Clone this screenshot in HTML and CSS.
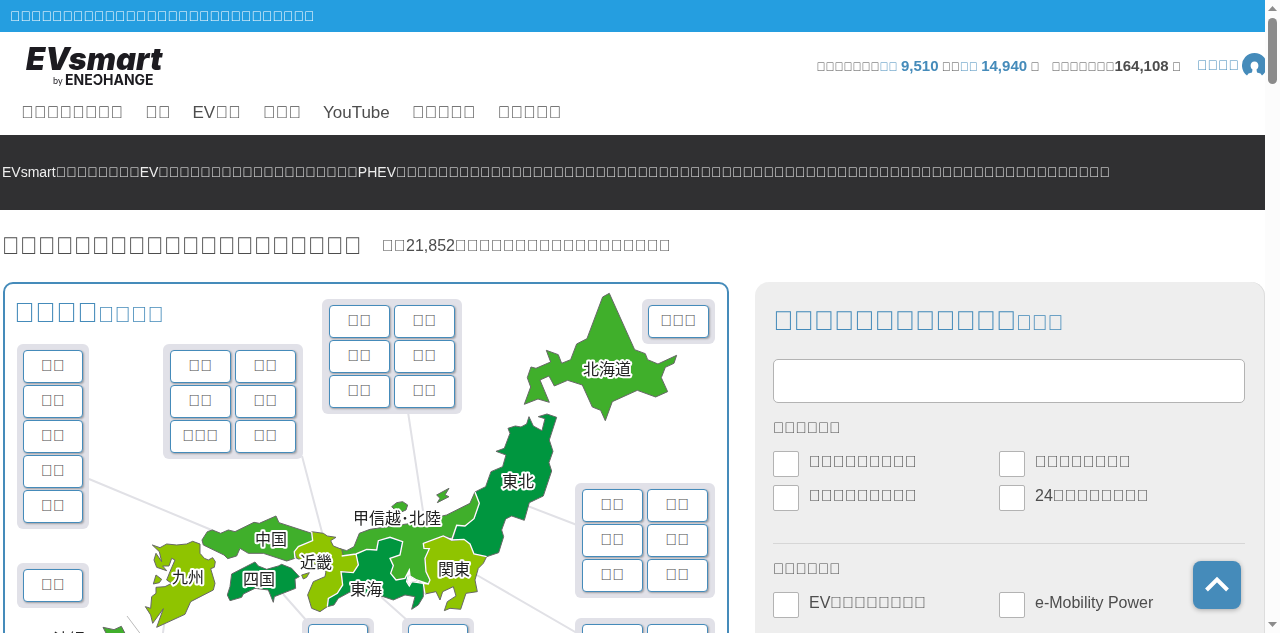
FILE: index.html
```html
<!DOCTYPE html>
<html lang="ja">
<head>
  <meta charset="UTF-8">
  <title>EVsmart</title>
  <link rel="stylesheet" href="styles.css">
</head>
<body>
  <div class="topbar">&#xE000;&#xE000;&#xE000;&#xE000;&#xE000;&#xE000;&#xE000;&#xE000;&#xE000;&#xE000;&#xE000;&#xE000;&#xE000;&#xE000;&#xE000;&#xE000;&#xE000;&#xE000;&#xE000;&#xE000;&#xE000;&#xE000;&#xE000;&#xE000;&#xE000;&#xE000;&#xE000;&#xE000;&#xE000;</div>

  <header class="header">
    <div class="header-row">
      <a href="#" class="logo">
        <svg width="142" height="50" viewBox="0 0 142 50">
          <text class="logo-main" x="1" y="30">EVsmart</text>
          <text class="logo-by" x="28" y="44">by</text>
          <text class="logo-sub" x="40" y="45">ENEƆHANGE</text>
        </svg>
      </a>
      <div class="stats">
        <p>&#xE000;&#xE000;&#xE000;&#xE000;&#xE000;&#xE000;&#xE000;<a href="#">&#xE000;&#xE000; <b>9,510</b></a> &#xE000;&#xE000;<a href="#">&#xE000;&#xE000; <b>14,940</b></a> &#xE000;</p>
        <p>&#xE000;&#xE000;&#xE000;&#xE000;&#xE000;&#xE000;&#xE000;<b>164,108</b> &#xE000;</p>
        <a href="#" class="login">&#xE000;&#xE000;&#xE000;&#xE000;
          <svg width="25" height="25" viewBox="0 0 25 25">
            <path fill="#458bba" d="M5 22.500A12.500 12.500 0 1 1 20 22.500L18.500 20.500 15 19.500 14.500 16.500C17.500 14.500 17 8.500 12.500 8.500S7.500 14.500 10.500 16.500L10 19.500 6.500 20.500Z"/>
          </svg>
        </a>
      </div>
    </div>
    <nav class="nav">
      <a href="#">&#xE000;&#xE000;&#xE000;&#xE000;&#xE000;&#xE000;&#xE000;&#xE000;</a>
      <a href="#">&#xE000;&#xE000;</a>
      <a href="#">EV&#xE000;&#xE000;</a>
      <a href="#">&#xE000;&#xE000;&#xE000;</a>
      <a href="#">YouTube</a>
      <a href="#">&#xE000;&#xE000;&#xE000;&#xE000;&#xE000;</a>
      <a href="#">&#xE000;&#xE000;&#xE000;&#xE000;&#xE000;</a>
    </nav>
  </header>

  <p class="intro">EVsmart&#xE000;&#xE000;&#xE000;&#xE000;&#xE000;&#xE000;&#xE000;&#xE000;EV&#xE000;&#xE000;&#xE000;&#xE000;&#xE000;&#xE000;&#xE000;&#xE000;&#xE000;&#xE000;&#xE000;&#xE000;&#xE000;&#xE000;&#xE000;&#xE000;&#xE000;&#xE000;&#xE000;PHEV&#xE000;&#xE000;&#xE000;&#xE000;&#xE000;&#xE000;&#xE000;&#xE000;&#xE000;&#xE000;&#xE000;&#xE000;&#xE000;&#xE000;&#xE000;&#xE000;&#xE000;&#xE000;&#xE000;&#xE000;&#xE000;&#xE000;&#xE000;&#xE000;&#xE000;&#xE000;&#xE000;&#xE000;&#xE000;&#xE000;&#xE000;&#xE000;&#xE000;&#xE000;&#xE000;&#xE000;&#xE000;&#xE000;&#xE000;&#xE000;&#xE000;&#xE000;&#xE000;&#xE000;&#xE000;&#xE000;&#xE000;&#xE000;&#xE000;&#xE000;&#xE000;&#xE000;&#xE000;&#xE000;&#xE000;&#xE000;&#xE000;&#xE000;&#xE000;&#xE000;&#xE000;&#xE000;&#xE000;&#xE000;&#xE000;&#xE000;&#xE000;&#xE000;</p>

  <div class="page-title">
    <h1>&#xE000;&#xE000;&#xE000;&#xE000;&#xE000;&#xE000;&#xE000;&#xE000;&#xE000;&#xE000;&#xE000;&#xE000;&#xE000;&#xE000;&#xE000;&#xE000;&#xE000;&#xE000;&#xE000;&#xE000;</h1>
    <p>&#xE000;&#xE000;21,852&#xE000;&#xE000;&#xE000;&#xE000;&#xE000;&#xE000;&#xE000;&#xE000;&#xE000;&#xE000;&#xE000;&#xE000;&#xE000;&#xE000;&#xE000;&#xE000;&#xE000;&#xE000;</p>
  </div>

  <main class="columns">
    <section class="map-card">
      <h2>&#xE000;&#xE000;&#xE000;&#xE000;<small>&#xE000;&#xE000;&#xE000;&#xE000;</small></h2>

      <svg class="map" width="722" height="420" viewBox="5 284 722 420">
        <g stroke="#e1e1e6" stroke-width="2">
          <path d="M89 479L214 531M302 456L324 540M408 412L423 511M525 505L577 525M475 574L577 633M380 596L408 621M283 594L306 620M165 618L162 640"/>
          <path stroke="#bbb" stroke-width="1" d="M127 616L142 636"/>
        </g>
        <g stroke="#666" stroke-width="3" stroke-linejoin="round">
          <!-- hokkaido -->
          <path transform="translate(310 275) scale(.3333)" fill="#40af2b" d="M878 66L898 55 974 224 1006 236 1013 254 1044 267 1100 241 1092 265 1066 277 1054 308 1073 350 1037 366 982 346 907 380 886 437 872 406 847 396 817 330 773 316 733 333 717 303 690 315 718 382 684 372 643 388 662 336 652 308 663 276 678 280 722 261 709 226 745 239 755 265 782 254 800 207 831 191Z"/>
          <g transform="translate(310 400) scale(.3333)">
            <!-- tohoku -->
            <path fill="#00963f" d="M657 50L670 78 696 92 705 56 685 50 711 42 740 52 718 120 729 154 717 188 725 213 700 288 658 308 643 361 605 348 587 357 575 390 581 410 566 458 530 470 492 462 480 432 462 418 425 422 440 376 465 378 492 356 508 310 495 276 527 260 543 215 578 200 588 165 558 154 583 145 600 100 594 85 616 78 633 81 650 72Z"/>
            <!-- koshinetsu, hokuriku -->
            <path fill="#40af2b" d="M495 276L508 310 492 356 465 378 440 376 430 415 400 408 372 418 340 430 342 445 358 446 345 475 348 515 360 540 355 552 320 540 300 528 298 510 285 535 258 540 242 520 250 497 240 475 270 465 278 425 240 412 205 422 200 450 170 448 138 462 95 468 90 446 110 452 132 440 148 400 180 388 290 372 410 345 480 310Z"/>
            <path fill="#40af2b" d="M380 285L417 265 405 285 417 290 382 308 390 295ZM245 320L260 308 278 305 293 315 288 330 265 340Z"/>
            <!-- kanto -->
            <path fill="#8fc400" d="M400 408L425 422 462 418 480 432 492 462 530 470 520 490 505 505 495 540 502 575 468 580 452 628 420 625 403 632 412 605 438 588 430 560 398 575 390 600 378 575 345 582 340 550 355 552 360 540 348 515 345 475 358 446 342 445 340 430 372 418Z"/>
            <!-- tokai -->
            <path fill="#00963f" d="M205 422L240 412 278 425 270 465 240 475 250 497 242 520 258 540 285 535 298 510 290 545 298 558 305 545 340 550 340 590 325 615 305 628 315 590 285 585 250 600 220 590 120 576 85 595 72 615 52 620 55 595 82 580 98 555 93 515 130 518 145 495 138 462 170 448 200 450Z"/>
          </g>
          <g transform="translate(120 480) scale(.3333)">
            <!-- chugoku -->
            <path fill="#40af2b" d="M262 155L277 150 302 160 325 150 345 155 402 127 418 130 468 108 477 128 575 160 578 182 535 200 523 215 525 235 500 243 430 220 385 220 360 205 350 228 323 236 312 225 250 195 246 180Z"/>
            <!-- kinki -->
            <path fill="#8fc400" d="M575 155L610 160 622 168 648 172 632 182 640 198 665 208 670 228 708 222 715 255 700 278 665 275 668 315 652 340 625 355 622 380 600 395 575 385 563 345 580 305 615 290 618 275 590 255 530 235 523 215 535 200 578 182ZM545 285L568 278 560 292 550 297Z"/>
            <!-- shikoku -->
            <path fill="#00963f" d="M335 282L405 246 415 258 440 268 475 258 485 253 515 265 538 290 525 297 527 325 463 350 460 367 445 330 405 325 370 342 365 352 330 362 322 345 330 320Z"/>
            <!-- kyushu -->
            <path fill="#8fc400" d="M97 195L120 203 140 192 170 195 200 192 218 184 240 192 240 220 253 235 265 240 278 233 286 245 283 262 272 266 285 310 280 330 212 365 195 403 110 442 130 386 98 430 92 405 76 380 92 385 95 350 108 340 108 322 135 320 155 310 140 300 150 275 165 240 155 235 147 258 128 258 140 272 110 262 102 240 108 220 125 245 118 215ZM108 285L125 298 118 308 100 312Z"/>
            <!-- okinawa -->
            <path fill="#40af2b" d="M-51 442L-18 449 4 439 16 462 9 480 -31 480Z"/>
          </g>
        </g>
        <!-- inner borders -->
        <g fill="none" stroke="#fff" stroke-width="4">
          <path transform="translate(310 400) scale(.3333)" d="M495 276L508 310 492 356 465 378 440 376 425 420 400 408 372 418 340 430 342 445 358 446 345 475 348 515 360 540 355 552 320 540 300 528 298 510 285 535 258 540 242 520 250 497 240 475 270 465 278 425 240 412 205 422 200 450 170 448 138 462 95 468M425 420L462 418 480 432 492 462 530 470M298 510L290 545 298 558 305 545 340 550 355 552M340 550L345 582M138 462L145 495 130 518 93 515 98 555 82 580 55 595 52 620"/>
          <path transform="translate(120 480) scale(.3333)" d="M575 155L578 182 535 200 523 215 525 235"/>
        </g>
        <g class="map-label">
          <text x="583" y="375">北海道</text>
          <text x="502" y="487">東北</text>
          <text x="353" y="524">甲信越･北陸</text>
          <text x="438" y="575">関東</text>
          <text x="350" y="595">東海</text>
          <text x="300" y="568">近畿</text>
          <text x="255" y="545">中国</text>
          <text x="243" y="585">四国</text>
          <text x="172" y="583">九州</text>
          <text x="53" y="645">沖縄</text>
        </g>
      </svg>

      <div class="prefs one pos-chugoku">
        <a href="#">&#xE000;&#xE000;</a>
        <a href="#">&#xE000;&#xE000;</a>
        <a href="#">&#xE000;&#xE000;</a>
        <a href="#">&#xE000;&#xE000;</a>
        <a href="#">&#xE000;&#xE000;</a>
      </div>
      <div class="prefs pos-kinki">
        <a href="#">&#xE000;&#xE000;</a>
        <a href="#">&#xE000;&#xE000;</a>
        <a href="#">&#xE000;&#xE000;</a>
        <a href="#">&#xE000;&#xE000;</a>
        <a href="#">&#xE000;&#xE000;&#xE000;</a>
        <a href="#">&#xE000;&#xE000;</a>
      </div>
      <div class="prefs pos-hokuriku">
        <a href="#">&#xE000;&#xE000;</a>
        <a href="#">&#xE000;&#xE000;</a>
        <a href="#">&#xE000;&#xE000;</a>
        <a href="#">&#xE000;&#xE000;</a>
        <a href="#">&#xE000;&#xE000;</a>
        <a href="#">&#xE000;&#xE000;</a>
      </div>
      <div class="prefs one pos-hokkaido">
        <a href="#">&#xE000;&#xE000;&#xE000;</a>
      </div>
      <div class="prefs pos-tohoku">
        <a href="#">&#xE000;&#xE000;</a>
        <a href="#">&#xE000;&#xE000;</a>
        <a href="#">&#xE000;&#xE000;</a>
        <a href="#">&#xE000;&#xE000;</a>
        <a href="#">&#xE000;&#xE000;</a>
        <a href="#">&#xE000;&#xE000;</a>
      </div>
      <div class="prefs one pos-okinawa">
        <a href="#">&#xE000;&#xE000;</a>
      </div>
      <div class="prefs one pos-shikoku">
        <a href="#">&#xE000;&#xE000;</a>
      </div>
      <div class="prefs one pos-tokai">
        <a href="#">&#xE000;&#xE000;</a>
      </div>
      <div class="prefs pos-kanto">
        <a href="#">&#xE000;&#xE000;</a>
        <a href="#">&#xE000;&#xE000;</a>
      </div>
    </section>

    <form class="search-card">
      <h2><label for="keyword">&#xE000;&#xE000;&#xE000;&#xE000;&#xE000;&#xE000;&#xE000;&#xE000;&#xE000;&#xE000;&#xE000;&#xE000;<small>&#xE000;&#xE000;&#xE000;</small></label></h2>
      <input type="text" id="keyword" class="keyword">

      <fieldset>
        <legend>&#xE000;&#xE000;&#xE000;&#xE000;&#xE000;&#xE000;</legend>
        <div class="checks">
          <label><input type="checkbox"><span>&#xE000;&#xE000;&#xE000;&#xE000;&#xE000;&#xE000;&#xE000;&#xE000;&#xE000;</span></label>
          <label><input type="checkbox"><span>&#xE000;&#xE000;&#xE000;&#xE000;&#xE000;&#xE000;&#xE000;&#xE000;</span></label>
          <label><input type="checkbox"><span>&#xE000;&#xE000;&#xE000;&#xE000;&#xE000;&#xE000;&#xE000;&#xE000;&#xE000;</span></label>
          <label><input type="checkbox"><span>24&#xE000;&#xE000;&#xE000;&#xE000;&#xE000;&#xE000;&#xE000;&#xE000;</span></label>
        </div>
      </fieldset>
      <hr>
      <fieldset>
        <legend>&#xE000;&#xE000;&#xE000;&#xE000;&#xE000;&#xE000;</legend>
        <div class="checks">
          <label><input type="checkbox"><span>EV&#xE000;&#xE000;&#xE000;&#xE000;&#xE000;&#xE000;&#xE000;&#xE000;</span></label>
          <label><input type="checkbox"><span>e-Mobility Power</span></label>
        </div>
      </fieldset>
    </form>
  </main>

  <button class="to-top" aria-label="Top">
    <svg width="24" height="16" viewBox="0 0 24 16"><path d="M1.500 14L12 3.500 22.500 14" fill="none" stroke="#fff" stroke-width="4"/></svg>
  </button>

  <div class="scrollbar">
    <svg width="9" height="5" viewBox="0 0 9 5"><path fill="#8b8b8b" d="M0 5L4.500 0 9 5Z"/></svg>
    <div class="thumb"></div>
    <svg width="9" height="5" viewBox="0 0 9 5"><path fill="#8b8b8b" d="M0 0L4.500 5 9 0Z"/></svg>
  </div>
</body>
</html>
```

FILE: styles.css
```css
* {
  box-sizing: border-box;
}

body {
  margin: 0;
  padding-right: 15px;
  height: 100vh;
  overflow: hidden;
  font-family: "Liberation Sans", Arial, sans-serif;
  font-size: 16px;
  color: #4d4d4d;
  will-change: opacity;
}

a {
  color: #458bba;
  text-decoration: none;
}

p, h1, h2 {
  margin: 0;
  font-weight: normal;
}

.topbar {
  padding: 0 10px;
  font-size: 14px;
  line-height: 32px;
  color: #fff;
  background: #259ee0;
}

/* header */
.header {
  height: 103px;
  overflow: hidden;
}

.header-row {
  display: flex;
  justify-content: space-between;
  height: 68px;
  padding: 8px 0 0 25px;
}

.logo svg {
  overflow: visible;
}

.logo-main {
  font: italic 900 31px Inter, sans-serif;
  fill: #1c1b20;
}

.logo-by {
  font: 9px Lato, sans-serif;
  fill: #1c1b20;
}

.logo-sub {
  font: 700 14px Inter, sans-serif;
  fill: #1c1b20;
}

.stats {
  display: flex;
  gap: 12px;
  margin-right: -2px;
  font-size: 12px;
  line-height: 52px;
  white-space: nowrap;
}

.stats b {
  font-size: 15px;
}

.login {
  display: flex;
  align-items: center;
  gap: 3px;
  height: 50px;
  margin-left: 4px;
  font-size: 14px;
}

.nav {
  display: flex;
  gap: 22px;
  padding-left: 21px;
  font-size: 17px;
  line-height: 26px;
}

.nav a {
  color: #4d4d4d;
}

.intro {
  padding: 0 2px;
  font-size: 14px;
  line-height: 75px;
  color: #eee;
  background: #303032;
}

.page-title {
  display: flex;
  gap: 20px;
  padding-left: 2px;
  line-height: 72px;
}

.page-title h1 {
  font-size: 24px;
}

.columns {
  display: grid;
  grid-template-columns: 726fr 510fr;
  gap: 26px;
  padding-left: 3px;
}

h2 {
  font-size: 28px;
  line-height: 32px;
  color: #458bba;
}

h2 small {
  font-size: 22px;
}

/* map */
.map-card {
  position: relative;
  height: 480px;
  border: 2px solid #458bba;
  border-radius: 10px;
}

.map-card h2 {
  padding: 13px 9px;
}

.map {
  position: absolute;
  top: 0;
  left: 0;
}

.map-label {
  font: 16px "Noto Sans CJK JP", sans-serif;
  fill: #222;
  stroke: #fff;
  stroke-width: 4px;
  stroke-linejoin: round;
  paint-order: stroke;
}

.prefs {
  position: absolute;
  display: grid;
  grid-template-columns: 61px 61px;
  gap: 2px 4px;
  padding: 6px 7px;
  border-radius: 6px;
  background: #e1e1e8;
}

.prefs.one {
  grid-template-columns: 60px;
  padding: 6px;
}

.prefs a {
  height: 33px;
  border: 1px solid #458bba;
  border-radius: 4px;
  line-height: 30px;
  text-align: center;
  color: #4d4d4d;
  background: #fff;
  box-shadow: 1px 1px 2px rgba(0, 0, 0, 0.3);
}

.pos-chugoku { left: 12px; top: 60px; }
.pos-kinki { left: 158px; top: 60px; }
.pos-hokuriku { left: 317px; top: 15px; }
.pos-hokkaido { left: 637px; top: 15px; }
.pos-tohoku { left: 570px; top: 199px; }
.pos-okinawa { left: 12px; top: 279px; }
.pos-shikoku { left: 297px; top: 334px; }
.pos-tokai { left: 397px; top: 334px; }
.pos-kanto { left: 570px; top: 334px; }

.prefs.pos-hokkaido {
  grid-template-columns: 61px;
}

/* search */
.search-card {
  height: 480px;
  padding: 23px 20px 0 18px;
  border-radius: 14px;
  background: #eee;
  box-shadow: inset -1px 0 0 #ddd;
}

.search-card h2 {
  font-size: 27px;
}

.search-card h2 small {
  font-size: 21px;
}

.keyword {
  display: block;
  width: 100%;
  height: 44px;
  margin: 20px 0 16px;
  padding: 0 12px;
  border: 1px solid #b3b3b3;
  border-radius: 5px;
  font-size: 16px;
  background: #fff;
}

fieldset {
  margin: 0;
  padding: 0;
  border: 0;
}

legend {
  padding: 0;
  font-size: 15px;
  line-height: 18px;
}

.checks {
  display: grid;
  grid-template-columns: 226fr 246fr;
  gap: 8px 0;
  padding-top: 14px;
}

.checks label {
  display: flex;
  gap: 10px;
  line-height: 22px;
}

.checks input {
  appearance: none;
  width: 26px;
  height: 26px;
  margin: 0;
  border: 1px solid #b3b3b3;
  border-radius: 2px;
  background: #fff;
}

hr {
  margin: 32px 0 16px;
  border: 0;
  border-top: 1px solid #d6d6d6;
}

.to-top {
  position: fixed;
  right: 39px;
  bottom: 24px;
  width: 48px;
  height: 48px;
  padding: 0;
  border: 0;
  border-radius: 8px;
  background: #458bba;
  box-shadow: 0 1px 5px rgba(0, 0, 0, 0.3);
}

.scrollbar {
  position: fixed;
  top: 0;
  right: 0;
  bottom: 0;
  display: flex;
  flex-direction: column;
  align-items: center;
  width: 15px;
  padding: 6px 0;
  background: #fcfcfc;
}

.thumb {
  width: 9px;
  height: 66px;
  margin: 7px 0 auto;
  border-radius: 5px;
  background: #8b8b8b;
}
```
